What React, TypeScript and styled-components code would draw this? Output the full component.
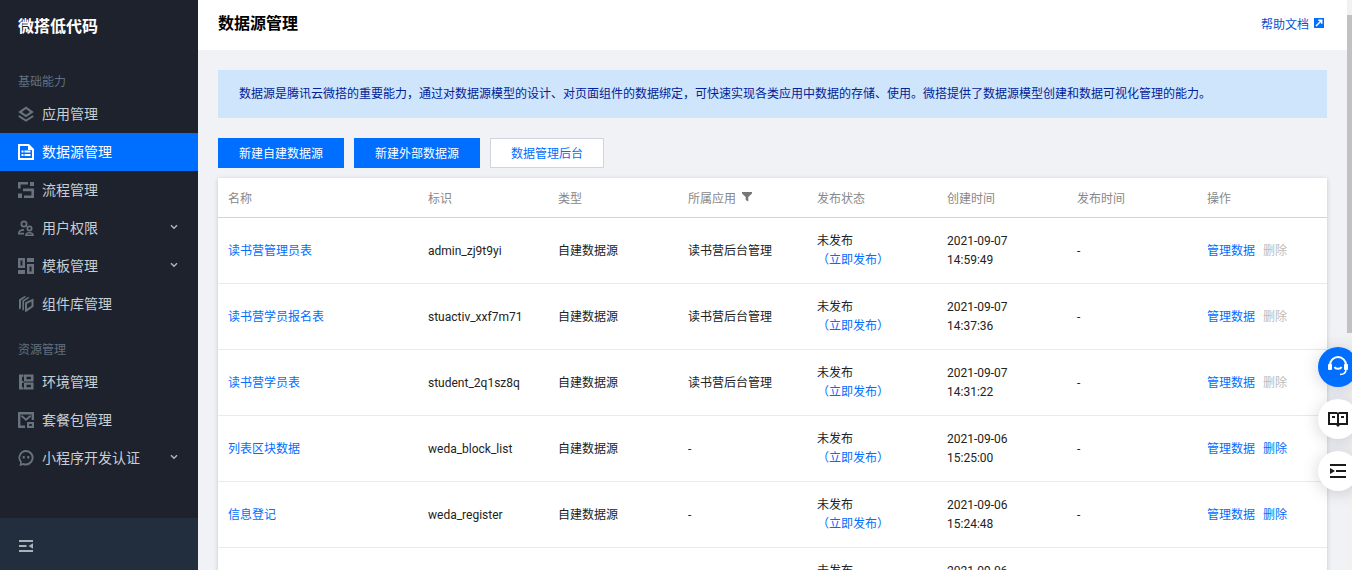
import React from "react";
import styled, { createGlobalStyle } from "styled-components";

const Global = createGlobalStyle`
  html, body { margin: 0; padding: 0; height: 100%; overflow: hidden; }
  body { font-family: Roboto, "Noto Sans CJK SC", "Liberation Sans", sans-serif; font-size: 12px; color: #222; }
  * { box-sizing: border-box; }
`;

const Page = styled.div`
  display: flex; width: 1352px; height: 570px; overflow: hidden; background: #f1f2f6; position: relative;
`;
const Sidebar = styled.aside`
  width: 198px; flex: none; height: 570px; background: #1e222d; display: flex; flex-direction: column;
`;
const Logo = styled.div`
  height: 55px; padding: 17px 18px 0; font-size: 16px; line-height: 20px; font-weight: 700; color: #fff;
`;
const Nav = styled.nav`flex: 1; display: flex; flex-direction: column;`;
const SectionLabel = styled.div`
  height: 27px; margin-top: 13px; padding-left: 18px; font-size: 12px; line-height: 29px; color: #5f7080;
`;
const NavItem = styled.div<{ $active?: boolean }>`
  height: 38px; display: flex; align-items: center; padding: 0 18px; gap: 8px; font-size: 14px;
  color: ${p => (p.$active ? "#fff" : "#c6ced6")};
  background: ${p => (p.$active ? "#006eff" : "transparent")};
`;
const NavText = styled.span`flex: 1; padding-bottom: 2px;`;
const Footer = styled.div`
  height: 52px; flex: none; background: #222d3d; padding: 4px 0 0 19px; display: flex; align-items: center;
`;
const Main = styled.main`flex: 1; min-width: 0; display: flex; flex-direction: column;`;
const Header = styled.header`
  height: 50px; flex: none; background: #fff; padding: 0 23px 0 20px; display: flex; align-items: center; justify-content: space-between;
`;
const Title = styled.h1`margin: 0 0 6px; font-size: 16px; font-weight: 700; color: #000;`;
const Help = styled.a`display: flex; align-items: center; gap: 5px; font-size: 12px; color: #0052d9; margin-bottom: 4px;`;
const Content = styled.div`padding: 20px 20px 0; display: flex; flex-direction: column;`;
const Notice = styled.div`
  height: 48px; background: #cfe5fc; padding: 0 21px 3px; display: flex; align-items: center; color: #00229a; font-size: 12px;
`;
const Toolbar = styled.div`display: flex; gap: 10px; margin-top: 20px;`;
const Button = styled.button<{ $primary?: boolean }>`
  height: 30px; padding: 0 20px 2px; font: inherit; font-size: 12px; cursor: pointer; border-radius: 0;
  border: 1px solid ${p => (p.$primary ? "#006eff" : "#cfd5de")};
  background: ${p => (p.$primary ? "#006eff" : "#fff")};
  color: ${p => (p.$primary ? "#fff" : "#006eff")};
`;
const Table = styled.div`
  margin-top: 10px; background: #fff; box-shadow: 0 1px 4px rgba(54, 58, 80, .25);
`;
const cols = "200px 130px 130px 129px 130px 130px 130px 1fr";
const HeadRow = styled.div`
  display: grid; grid-template-columns: ${cols}; height: 40px; align-items: center; border-bottom: 1px solid #cfd5de; color: #888;
`;
const HeadCell = styled.div`padding-left: 10px; display: flex; align-items: center; gap: 6px;`;
const FilterIcon = styled.svg`margin-bottom: 2px;`;
const Row = styled.div`
  display: grid; grid-template-columns: ${cols}; height: 66px; align-items: center; border-bottom: 1px solid #e7eaef; color: #222;
`;
const Cell = styled.div`padding: 2px 0 0 10px; line-height: 19px; white-space: nowrap;`;
const StackedCell = styled(Cell)`padding-top: 0;`;
const Link = styled.a<{ $disabled?: boolean }>`
  color: ${p => (p.$disabled ? "#bbb" : "#006eff")};
`;
const Actions = styled(Cell)`display: flex; gap: 8px;`;
const Publish = styled.div`color: #006eff;`;
const Scrollbar = styled.div`width: 5px; flex: none; background: #f1f1f1; padding-top: 15px;`;
const Thumb = styled.div`height: 318px; background: #c1c1c1;`;
const Fabs = styled.div`
  position: absolute; left: 1318px; top: 347px; display: flex; flex-direction: column; gap: 12px;
`;
const Fab = styled.div<{ $primary?: boolean }>`
  width: 40px; height: 40px; border-radius: 50%; display: flex; align-items: center; justify-content: center;
  background: ${p => (p.$primary ? "#006eff" : "#fff")};
  box-shadow: 0 2px 16px rgba(54, 58, 80, .22);
`;
const Chevron = styled.svg`width: 8px; height: 6px; margin: 0 2px 3px 0; flex: none;`;

const G = "#68737d";
const I = ({ children, c = G }: { children: React.ReactNode; c?: string }) => (
  <svg width="16" height="16" viewBox="0 0 16 16" fill={c} style={{ flex: "none" }}>{children}</svg>
);
const icons: Record<string, React.ReactNode> = {
  layers: <I><path d="M8 .4 15.800 6 8 11.200.2 6zM8 3 4 6l4 2.700L12 6z" fillRule="evenodd"/><path d="M1.400 9.200 8 13.400l6.600-4.200 1.200 1.500L8 15.800.2 10.700z"/></I>,
  data: <I c="#fff"><path d="M0 0h11l5 5v11H0zM2 2v12h12V6h-4V2z" fillRule="evenodd"/><path d="M3.500 6.500h2v2h-2zM6.500 6.500h6v2h-6zM3.500 10h2v2h-2zM6.500 10h6v2h-6z"/></I>,
  flow: <I><path d="M0 0h10v2.600H2.600v4H0zM12 0h4v4h-4zM5 6.600h11V16H6v-2.600h7.400V9.200H5zM0 11.500h4V16H0z"/></I>,
  users: <I><path d="M6 .5a3.500 3.500 0 1 1 0 7 3.500 3.500 0 0 1 0-7zm0 1.800a1.700 1.700 0 1 0 0 3.400 1.700 1.700 0 0 0 0-3.400zM0 13.500c0-3 2-4.500 6-4.500v1.800c-2.600 0-3.900.7-4.200 1.900H6v1.800H0z" fillRule="evenodd"/><path d="M11.500 5.500a3 3 0 1 1 0 6 3 3 0 0 1 0-6zm0 1.700a1.300 1.300 0 1 0 0 2.600 1.300 1.300 0 0 0 0-2.600zM7 16c0-2.800 1.800-4 4.500-4s4.500 1.200 4.500 4zm2-1.600h5c-.4-.5-1.300-.8-2.500-.8s-2.100.3-2.500.8z" fillRule="evenodd"/></I>,
  template: <I><path d="M0 0h7v10H0zM2.500 2.500v5h2v-5z" fillRule="evenodd"/><path d="M9 0h7v4H9zM0 12h7v4H0z"/><path d="M9 6h7v10H9zM11.500 8.500v5h2v-5z" fillRule="evenodd"/></I>,
  comp: <I><path d="M6.500 0 8 .8 3 4.500v7.700L1 13.400V3.400zM10 1l1.500.8L6 5.500v8.300l-1.600 1V4.600z"/><path d="M7 6.400 15.500 2.500v8.300L8 16l-1-.6zm2 1.300v5.100l4.500-3.100V5.500z" fillRule="evenodd"/></I>,
  env: <I><path d="M1 .5h3v15H1zM4 .5h1.500v2.200H4zM4 6.900h1.500v2.200H4zM4 13.300h1.500v2.200H4z"/><path d="M6 .5h9.500v7H6zM8.500 2.800v2.400h4.500V2.800zM6 8.500h9.500v7H6zM8.500 10.800v2.400h4.500v-2.400z" fillRule="evenodd"/></I>,
  pkg: <I><path d="M0 0h16v8h-2.400V2.400H2.400v11.200H7V16H0z"/><path d="M4 3 8 6.500 12 3l1.200 1.400L8 9 2.800 4.400zM9 10h7v6H9zm2.200 2v2h2.600v-2z" fillRule="evenodd"/></I>,
  chat: <I><path d="M8 0a7.700 7.700 0 1 1-2.800 14.900L1.500 16l.7-3.500A7.700 7.700 0 0 1 8 0zm0 2a5.700 5.700 0 0 0-4.200 9.600l-.2 2 2-.7A5.700 5.700 0 1 0 8 2z" fillRule="evenodd"/><path d="M4.700 6h2v2.600h-2zM9.300 6h2v2.600h-2z"/></I>,
};

const Chev = () => (
  <Chevron viewBox="0 0 8 6"><path d="M1 1.300 4 4.300l3-3" fill="none" stroke="#aeb6bd" strokeWidth="1.500"/></Chevron>
);

const Item = ({ icon, text, active, more }: { icon: string; text: string; active?: boolean; more?: boolean }) => (
  <NavItem $active={active}>{icons[icon]}<NavText>{text}</NavText>{more && <Chev />}</NavItem>
);

const rows = [
  { name: "读书营管理员表", id: "admin_zj9t9yi", app: "读书营后台管理", d: "2021-09-07", t: "14:59:49", off: true },
  { name: "读书营学员报名表", id: "stuactiv_xxf7m71", app: "读书营后台管理", d: "2021-09-07", t: "14:37:36", off: true },
  { name: "读书营学员表", id: "student_2q1sz8q", app: "读书营后台管理", d: "2021-09-07", t: "14:31:22", off: true },
  { name: "列表区块数据", id: "weda_block_list", app: "-", d: "2021-09-06", t: "15:25:00", off: false },
  { name: "信息登记", id: "weda_register", app: "-", d: "2021-09-06", t: "15:24:48", off: false },
];

export default function App() {
  return (
    <Page>
      <Global />
      <Sidebar>
        <Logo>微搭低代码</Logo>
        <Nav>
          <SectionLabel>基础能力</SectionLabel>
          <Item icon="layers" text="应用管理" />
          <Item icon="data" text="数据源管理" active />
          <Item icon="flow" text="流程管理" />
          <Item icon="users" text="用户权限" more />
          <Item icon="template" text="模板管理" more />
          <Item icon="comp" text="组件库管理" />
          <SectionLabel>资源管理</SectionLabel>
          <Item icon="env" text="环境管理" />
          <Item icon="pkg" text="套餐包管理" />
          <Item icon="chat" text="小程序开发认证" more />
        </Nav>
        <Footer>
          <svg width="14" height="12" viewBox="0 0 14 12" fill="#aab2b9">
            <path d="M0 0h14v2H0zM0 5h7.500v2H0zM0 10h14v2H0zM14 3.200v5.600L9.500 6z" />
          </svg>
        </Footer>
      </Sidebar>
      <Main>
        <Header>
          <Title>数据源管理</Title>
          <Help>
            帮助文档
            <svg width="10" height="10" viewBox="0 0 10 10">
              <path d="M0 0h10v10H0z" fill="#006eff" />
              <path d="M2 8 7 3M4.300 2.300h3.400v3.400" fill="none" stroke="#fff" strokeWidth="1.500" />
            </svg>
          </Help>
        </Header>
        <Content>
          <Notice>数据源是腾讯云微搭的重要能力，通过对数据源模型的设计、对页面组件的数据绑定，可快速实现各类应用中数据的存储、使用。微搭提供了数据源模型创建和数据可视化管理的能力。</Notice>
          <Toolbar>
            <Button $primary>新建自建数据源</Button>
            <Button $primary>新建外部数据源</Button>
            <Button>数据管理后台</Button>
          </Toolbar>
          <Table>
            <HeadRow>
              <HeadCell>名称</HeadCell>
              <HeadCell>标识</HeadCell>
              <HeadCell>类型</HeadCell>
              <HeadCell>
                所属应用
                <FilterIcon width="10" height="10" viewBox="0 0 10 10" fill="#777"><path d="M0 0h10v1.500L6.300 5v4.500L3.700 8V5L0 1.500z" /></FilterIcon>
              </HeadCell>
              <HeadCell>发布状态</HeadCell>
              <HeadCell>创建时间</HeadCell>
              <HeadCell>发布时间</HeadCell>
              <HeadCell>操作</HeadCell>
            </HeadRow>
            {rows.map(r => (
              <Row key={r.id}>
                <Cell><Link>{r.name}</Link></Cell>
                <Cell>{r.id}</Cell>
                <Cell>自建数据源</Cell>
                <Cell>{r.app}</Cell>
                <StackedCell>未发布<Publish>（立即发布）</Publish></StackedCell>
                <StackedCell>{r.d}<br />{r.t}</StackedCell>
                <Cell>-</Cell>
                <Actions><Link>管理数据</Link><Link $disabled={r.off}>删除</Link></Actions>
              </Row>
            ))}
            <Row>
              <Cell />
              <Cell />
              <Cell />
              <Cell />
              <StackedCell>未发布<Publish>（立即发布）</Publish></StackedCell>
              <StackedCell>2021-09-06<br />15:24:00</StackedCell>
              <Cell />
              <Cell />
            </Row>
          </Table>
        </Content>
      </Main>
      <Scrollbar><Thumb /></Scrollbar>
      <Fabs>
        <Fab $primary>
          <svg width="40" height="40" viewBox="0 0 40 40" fill="none" stroke="#fff">
            <path d="M12 20v-2a8 8 0 0 1 16 0v2" strokeWidth="2" />
            <path d="M10.500 17.500h3v5h-3zM26.500 17.500h3v5h-3z" fill="#fff" strokeWidth="1" />
            <path d="M16.500 20c1 2.400 6 2.400 7 0" strokeWidth="2" />
            <path d="M28 22c0 4-2 5.500-6 5.500" strokeWidth="1.500" />
          </svg>
        </Fab>
        <Fab>
          <svg width="40" height="40" viewBox="0 0 40 40" fill="#1a1a1a">
            <path d="M10 13h9l1 1 1-1h9v13h-8l-2 2-2-2h-8zM12 15v9h7v-9zM21 15v9h7v-9z" fillRule="evenodd" />
            <path d="M14 17h3v2h-3zM23 17h3v2h-3z" />
          </svg>
        </Fab>
        <Fab>
          <svg width="40" height="40" viewBox="0 0 40 40" fill="#1a1a1a">
            <path d="M12 13h16v2H12zM18 19h10v2H18zM12 25h16v2H12zM12 17v6l5-3z" />
          </svg>
        </Fab>
      </Fabs>
    </Page>
  );
}
